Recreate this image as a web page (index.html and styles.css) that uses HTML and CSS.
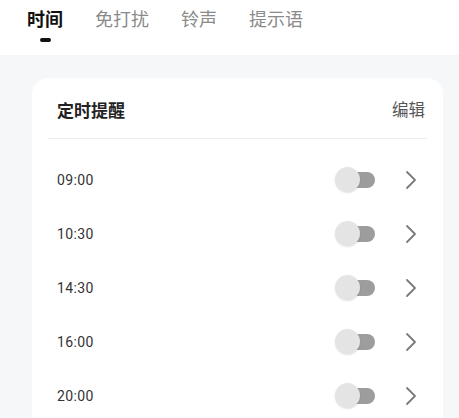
FILE: index.html
```html
<!DOCTYPE html>
<html lang="zh-CN">
<head>
  <meta charset="UTF-8" />
  <meta name="viewport" content="width=device-width, initial-scale=1.0" />
  <title>定时提醒</title>
  <link rel="stylesheet" href="styles.css">
</head>
<body>
  <nav class="tabs">
    <span class="tab active">时间</span>
    <span class="tab">免打扰</span>
    <span class="tab">铃声</span>
    <span class="tab">提示语</span>
  </nav>

  <section class="card">
    <div class="card-head">
      <span class="card-title">定时提醒</span>
      <span class="card-edit">编辑</span>
    </div>
    <ul class="list">
      <li class="row"><span class="time">09:00</span><span class="toggle"><i class="knob"></i></span><svg class="chev" viewBox="0 0 12 20"><path d="M2 2 L10 10 L2 18" /></svg></li>
      <li class="row"><span class="time">10:30</span><span class="toggle"><i class="knob"></i></span><svg class="chev" viewBox="0 0 12 20"><path d="M2 2 L10 10 L2 18" /></svg></li>
      <li class="row"><span class="time">14:30</span><span class="toggle"><i class="knob"></i></span><svg class="chev" viewBox="0 0 12 20"><path d="M2 2 L10 10 L2 18" /></svg></li>
      <li class="row"><span class="time">16:00</span><span class="toggle"><i class="knob"></i></span><svg class="chev" viewBox="0 0 12 20"><path d="M2 2 L10 10 L2 18" /></svg></li>
      <li class="row"><span class="time">20:00</span><span class="toggle"><i class="knob"></i></span><svg class="chev" viewBox="0 0 12 20"><path d="M2 2 L10 10 L2 18" /></svg></li>
    </ul>
  </section>
</body>
</html>
```

FILE: styles.css
```css
body { margin: 0; background: #f6f7f9; font-family: Roboto, "Noto Sans CJK SC", sans-serif; color: #222; }
.tabs { display: flex; gap: 32px; height: 55px; padding-left: 27px; background: #fff; box-sizing: border-box; padding-top: 6px; }
.tab { position: relative; font-size: 18px; line-height: 28px; color: #8a8a8a; }
.tab.active { color: #111; font-weight: 700; }
.tab.active::after { content: ""; position: absolute; left: 13px; top: 32px; width: 11px; height: 4px; border-radius: 2px; background: #111; }
.card { margin: 23px 16px 0 32px; padding: 0 16px; background: #fff; border-radius: 16px 16px 0 0; }
.card-head { display: flex; justify-content: space-between; align-items: center; height: 61px; padding: 2px 2px 0 9px; box-sizing: border-box; border-bottom: 1px solid #ececec; }
.card-title { font-size: 17px; font-weight: 600; color: #222; }
.card-edit { font-size: 16.5px; color: #555; }
.list { list-style: none; margin: 0; padding: 14px 0 0; }
.row { display: flex; align-items: center; height: 54px; padding: 0 10px 0 9px; }
.time { flex: 1; font-size: 14px; letter-spacing: 0.4px; color: #333; }
.toggle { position: relative; width: 37px; height: 16px; margin-left: 3px; border-radius: 8px; background: #9d9d9d; }
.knob { position: absolute; left: -3px; top: -5px; width: 25px; height: 25px; border-radius: 50%; background: #e4e4e4; box-shadow: 0 1px 2px rgba(0,0,0,0.12); }
.chev { width: 12px; height: 20px; margin-left: 30px; fill: none; stroke: #7a7a7a; stroke-width: 1.8; stroke-linecap: round; stroke-linejoin: round; }
```
